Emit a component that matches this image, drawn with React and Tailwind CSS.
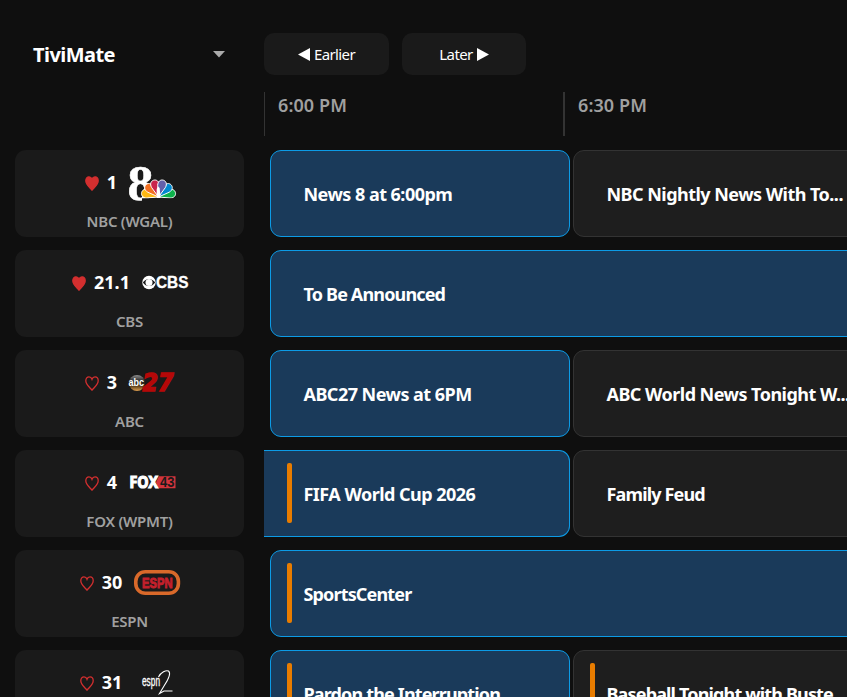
import React, { useState } from 'react';

const Heart = ({ filled }) => (
  <svg viewBox="0 0 14 15" className="w-[14px] h-[15px] shrink-0 mt-px">
    <path
      d="M7 14.200C5.300 11.800 .8 8.800 .8 4.700C.8 2.500 2.200 .8 4 .8C5.400 .8 6.500 1.700 7 3.200C7.500 1.700 8.600 .8 10 .8C11.800 .8 13.200 2.500 13.200 4.700C13.200 8.800 8.700 11.800 7 14.200Z"
      fill={filled ? '#d32f2f' : 'none'}
      stroke="#d32f2f"
      strokeWidth="1.300"
    />
  </svg>
);

const feathers = [
  { color: '#fdb913', angle: -75 },
  { color: '#0db14b', angle: 75 },
  { color: '#f37021', angle: -46 },
  { color: '#0089d0', angle: 46 },
  { color: '#c9234b', angle: -16 },
  { color: '#6460aa', angle: 16 },
];

const NbcLogo = () => (
  <svg viewBox="0 0 47 36" className="w-[47px] h-[36px] overflow-visible">
    <text x="-1.500" y="34.500" fontSize="50" fontWeight="700" fontFamily="Liberation Serif, serif" fill="#fff" stroke="#fff" strokeWidth=".5" textLength="26" lengthAdjust="spacingAndGlyphs">8</text>
    <path d="M13 33V27L19 19H23V33Z" fill="#fff" />
    <g transform="translate(29.500 32)">
      {feathers.map(f => (
        <path
          key={f.color}
          d="M0 0L-4 -11C-5 -15 -2.800 -17.500 0 -17.500C2.800 -17.500 5 -15 4 -11Z"
          transform={`rotate(${f.angle})`}
          fill={f.color}
          stroke="#fff"
          strokeWidth="0.900"
        />
      ))}
      <path d="M-1.800 1V-8L-.5 -10.500L1.200 -9L2 1Z" fill="#fff" />
    </g>
    <path d="M13 33.300H48V39H13Z" fill="#1a1a1a" />
  </svg>
);

const CbsLogo = () => (
  <svg viewBox="0 0 47 16" className="w-[47px] h-[16px] overflow-visible">
    <circle cx="7" cy="7.500" r="6.700" fill="#fff" />
    <path d="M.8 7.500C4 2.700 10 2.700 13.200 7.500C10 12.300 4 12.300 .8 7.500Z" fill="#1a1a1a" />
    <circle cx="7" cy="7.500" r="3.500" fill="#fff" />
    <text x="14" y="13" fontSize="16" fontWeight="700" fontFamily="Liberation Sans, sans-serif" fill="#fff" stroke="#fff" strokeWidth=".3" textLength="32.500" lengthAdjust="spacingAndGlyphs">CBS</text>
  </svg>
);

const AbcLogo = () => (
  <svg viewBox="0 0 47 24" className="w-[47px] h-[24px] overflow-visible">
    <defs>
      <linearGradient id="abcBall" x1="0" y1="0" x2="0" y2="1">
        <stop offset="0" stopColor="#8d8d8d" />
        <stop offset=".4" stopColor="#222" />
        <stop offset=".65" stopColor="#4a3214" />
        <stop offset="1" stopColor="#e0a050" />
      </linearGradient>
    </defs>
    <circle cx="8" cy="12" r="8" fill="url(#abcBall)" />
    <text x="13.500" y="20" fontSize="25" fontWeight="700" fontStyle="italic" fontFamily="DejaVu Sans, sans-serif" fill="#b50808" stroke="#b50808" strokeWidth="1.600" textLength="31" lengthAdjust="spacingAndGlyphs">27</text>
    <text x="-0.500" y="15.200" fontSize="10" fontWeight="700" fontFamily="Liberation Sans, sans-serif" fill="#fff" textLength="15.500" lengthAdjust="spacingAndGlyphs">abc</text>
  </svg>
);

const FoxLogo = () => (
  <svg viewBox="0 0 47 14" className="w-[47px] h-[14px] overflow-visible">
    <path d="M30 .3H46.500V12.300H29L27 6.300Z" fill="#d5343b" />
    <text x="0.500" y="11.800" fontSize="15.500" fontWeight="700" fontFamily="Open Sans, sans-serif" fill="#fff" stroke="#fff" strokeWidth="1.200" textLength="28.500" lengthAdjust="spacingAndGlyphs">FOX</text>
    <text x="31" y="11.300" fontSize="14" fontWeight="700" fontFamily="Liberation Sans, sans-serif" fill="#1a1a1a" textLength="14.500" lengthAdjust="spacingAndGlyphs">43</text>
  </svg>
);

const EspnLogo = () => (
  <svg viewBox="0 0 47 26" className="w-[47px] h-[26px] overflow-visible">
    <rect x="1.800" y="1.800" width="42.600" height="21.500" rx="9.500" fill="none" stroke="#d9692a" strokeWidth="3.600" />
    <text x="8" y="17.500" fontSize="15.500" fontWeight="700" fontFamily="Liberation Sans, sans-serif" fill="#c4202c" stroke="#c4202c" strokeWidth="1" textLength="30.500" lengthAdjust="spacingAndGlyphs">ESPN</text>
  </svg>
);

const Espn2Logo = () => (
  <svg viewBox="0 0 34 28" className="w-[34px] h-[28px] overflow-visible">
    <text x="1" y="17" fontSize="14" fontFamily="Liberation Sans, sans-serif" fill="#fff" stroke="#fff" strokeWidth=".3" textLength="18" lengthAdjust="spacingAndGlyphs">espn</text>
    <path d="M17.500 8C20 3 25 1 27.500 2C30 4 27 11 23 17L18.500 24.500L23 22H31.500" fill="none" stroke="#fff" strokeWidth="1.100" />
  </svg>
);

const channels = [
  {
    number: '1',
    name: 'NBC (WGAL)',
    favorite: true,
    Logo: NbcLogo,
    programs: [
      { title: 'News 8 at 6:00pm', live: true },
      { title: 'NBC Nightly News With To...' },
    ],
  },
  {
    number: '21.1',
    name: 'CBS',
    favorite: true,
    Logo: CbsLogo,
    programs: [{ title: 'To Be Announced', live: true, long: true, tight: true }],
  },
  {
    number: '3',
    name: 'ABC',
    Logo: AbcLogo,
    programs: [
      { title: 'ABC27 News at 6PM', live: true },
      { title: 'ABC World News Tonight W...' },
    ],
  },
  {
    number: '4',
    name: 'FOX (WPMT)',
    Logo: FoxLogo,
    programs: [
      { title: 'FIFA World Cup 2026', live: true, marked: true, started: true },
      { title: 'Family Feud', tight: true },
    ],
  },
  {
    number: '30',
    name: 'ESPN',
    Logo: EspnLogo,
    programs: [{ title: 'SportsCenter', live: true, marked: true, long: true, tight: true }],
  },
  {
    number: '31',
    name: 'ESPN2',
    Logo: Espn2Logo,
    programs: [
      { title: 'Pardon the Interruption', live: true, marked: true, tight: true },
      { title: 'Baseball Tonight with Buste', marked: true, tight: true },
    ],
  },
];

const ChannelCard = ({ channel, onToggle, favorite }) => {
  const { Logo } = channel;
  return (
    <div className="w-[229px] h-[87px] shrink-0 rounded-[11px] bg-[#1a1a1a] flex flex-col items-center">
      <div className="h-[65px] pl-[2px] flex items-center">
        <button onClick={onToggle} className="mr-2 flex">
          <Heart filled={favorite} />
        </button>
        <span className="text-[18px] font-bold text-white">{channel.number}</span>
        <div className="w-[47px] ml-3 flex justify-center">
          <Logo />
        </div>
      </div>
      <div className="-mt-[5px] text-[15px] leading-[22px] font-semibold text-[#a0a0a0] tracking-[-0.25px]">{channel.name}</div>
    </div>
  );
};

const ProgramCard = ({ program }) => {
  let box = 'w-[300px] rounded-[11px] border';
  if (program.long) box = 'w-[603px] rounded-[11px] border';
  if (program.started) box = 'w-[306px] -ml-1.5 pl-1.5 rounded-r-[11px] border-y border-r';
  const colors = program.live
    ? 'bg-[#1a3a5a] border-[#0c9be6]'
    : 'bg-[#1e1e1e] border-[#333]';

  return (
    <div className={`${box} ${colors} h-[87px] shrink-0 flex items-center`}>
      <div className={`${program.started ? 'ml-[17px]' : 'ml-4'} w-[16.500px] shrink-0`}>
        {program.marked && <div className="w-[5px] h-[60px] mb-px rounded-[2px] bg-[#e87c00]" />}
      </div>
      <span className={`pt-0.5 text-[18px] font-bold text-white whitespace-nowrap ${program.tight ? 'tracking-[-0.85px]' : 'tracking-[-0.53px]'}`}>
        {program.title}
      </span>
    </div>
  );
};

const App = () => {
  const [favorites, setFavorites] = useState(
    channels.filter(c => c.favorite).map(c => c.number)
  );

  const toggleFavorite = (number) => {
    setFavorites(prev =>
      prev.includes(number) ? prev.filter(n => n !== number) : [...prev, number]
    );
  };

  return (
    <div className="h-[697px] w-full overflow-hidden bg-[#0f0f0f] font-['Noto_Sans','Open_Sans',sans-serif]">
      {/* Playlist picker, paging and time scale */}
      <div className="h-[150px] pt-[33px] flex">
        <div className="w-[264px] shrink-0 h-[42px] pl-[33px] pr-[39px] flex items-center justify-between">
          <span className="pt-0.5 text-[20px] font-bold text-white tracking-[-0.55px]">TiviMate</span>
          <svg viewBox="0 0 12 7" className="w-3 h-[7px]">
            <path d="M0 0H12L6 6.500Z" fill="#aaa" />
          </svg>
        </div>
        <div className="shrink-0">
          <div className="flex gap-[13px] text-[15px] text-white tracking-[-0.6px]">
            <button className="w-[125px] h-[42px] rounded-[10px] bg-[#1a1a1a] flex items-center justify-center gap-1">
              <svg viewBox="0 0 12 13" className="w-3 h-[13px]">
                <path d="M12 0V13L0 6.500Z" fill="#fff" />
              </svg>
              <span>Earlier</span>
            </button>
            <button className="w-[124px] h-[42px] rounded-[10px] bg-[#1a1a1a] flex items-center justify-center gap-1">
              <span>Later</span>
              <svg viewBox="0 0 12 13" className="w-3 h-[13px]">
                <path d="M0 0V13L12 6.500Z" fill="#fff" />
              </svg>
            </button>
          </div>
          <div className="mt-[17px] flex text-[18px] leading-[27px] font-semibold text-[#a0a0a0] tracking-[0.1px]">
            <div className="w-[299px] h-11 pl-[13px] border-l border-[#333]">6:00 PM</div>
            <div className="w-[300px] h-11 pl-[13px] border-l-2 border-[#333]">6:30 PM</div>
          </div>
        </div>
      </div>

      {/* Guide rows */}
      <div className="flex flex-col gap-[13px] pl-[15px]">
        {channels.map(channel => (
          <div key={channel.number} className="flex">
            <ChannelCard
              channel={channel}
              favorite={favorites.includes(channel.number)}
              onToggle={() => toggleFavorite(channel.number)}
            />
            <div className="ml-[26px] flex gap-[3px]">
              {channel.programs.map(program => (
                <ProgramCard key={program.title} program={program} />
              ))}
            </div>
          </div>
        ))}
      </div>
    </div>
  );
};

export default App;
